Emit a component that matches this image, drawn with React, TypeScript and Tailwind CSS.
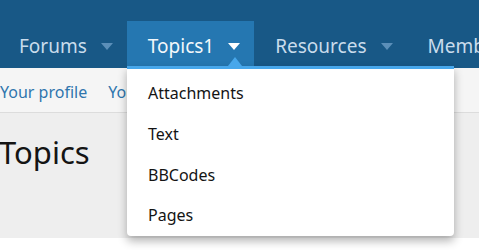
import type { ReactNode } from 'react';

function Caret({ className }: { className: string }) {
  return (
    <svg className={className} width="12" height="7" viewBox="0 0 12 7">
      <path d="M0 0h12L6 7z" fill="currentColor" />
    </svg>
  );
}

function NavTab({ label, active }: { label: string; active?: boolean }) {
  return (
    <div
      className={`flex items-center h-[47px] pt-[4px] pl-[21px] pr-[14px] gap-[14px] text-[19px] ${
        active ? 'bg-[#2577b1] text-[#f2f7fb]' : 'text-[#c9dcec]'
      }`}
    >
      <span>{label}</span>
      <Caret className={active ? 'text-white' : 'text-[#5b8fb9]'} />
    </div>
  );
}

function MenuItem({ children }: { children: ReactNode }) {
  return <div className="h-[40.7px] flex items-center px-[21px] text-[16px] text-[#141414]">{children}</div>;
}

export default function App() {
  return (
    <div className="relative w-[479px] h-[250px] overflow-hidden bg-white font-['Noto_Sans',sans-serif]">
      <div className="h-[68px] bg-[#185886] flex items-end -ml-[2px] whitespace-nowrap">
        <NavTab label="Forums" />
        <NavTab label="Topics1" active />
        <NavTab label="Resources" />
        <NavTab label="Members" />
      </div>

      <div className="h-[45px] bg-[#f5f5f5] border-b border-[#dcdcdc] flex items-center pt-[4px] gap-[21px] text-[16px] text-[#2f75ad] whitespace-nowrap">
        <span>Your profile</span>
        <span>Your news feed</span>
      </div>

      <div className="h-[125px] bg-[#eeeeee] pt-[19px]">
        <h1 className="text-[31px] leading-[40px] text-[#141414] -ml-[1px]">Topics</h1>
      </div>

      <div className="h-[20px] bg-white" />

      {/* dropdown menu */}
      <div className="absolute left-[127px] top-[66px] w-[327px] h-[170px] bg-white border-t-[3px] border-[#47a7eb] rounded-b-[4px] shadow-[0_5px_10px_rgba(0,0,0,0.3)]">
        <div className="absolute -top-[12px] left-[101px] w-0 h-0 border-x-[7px] border-x-transparent border-b-[9px] border-b-[#47a7eb]" />
        <div className="pt-[4px]">
          <MenuItem>Attachments</MenuItem>
          <MenuItem>Text</MenuItem>
          <MenuItem>BBCodes</MenuItem>
          <MenuItem>Pages</MenuItem>
        </div>
      </div>
    </div>
  );
}
